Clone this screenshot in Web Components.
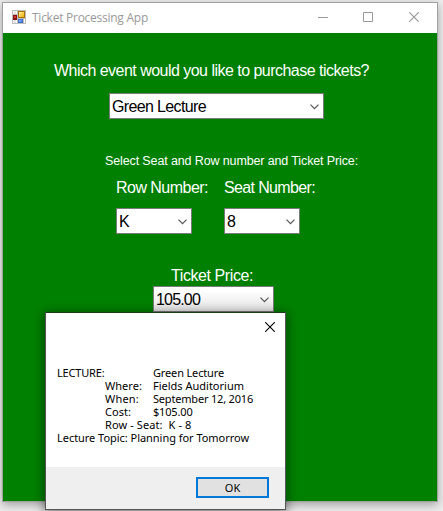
<!DOCTYPE html>
<html lang="en">
<head>
<meta charset="utf-8">
<title>Ticket Processing App</title>
<style>
html,body{margin:0;width:443px;height:511px;overflow:hidden}
body{background:#ededed;position:relative}
</style>
</head>
<body>
<ticket-app></ticket-app>
<script>
const define = (name, html, setup) => customElements.define(name, class extends HTMLElement {
  connectedCallback() {
    if (!this.shadowRoot) this.attachShadow({mode: 'open'}).innerHTML = html;
    if (setup) setup(this, this.shadowRoot);
  }
});

/* A line of text whose letter spacing is adjusted to fill the width in its "w" attribute. */
define('fit-text', `<style>
:host{display:block;white-space:pre;width:max-content}
span{display:inline-block}
</style><span><slot></slot></span>`, (host, root) => {
  const want = +host.getAttribute('w');
  const n = host.textContent.length;
  const have = root.querySelector('span').getBoundingClientRect().width;
  if (want && have) host.style.letterSpacing = ((want - have) / n).toFixed(4) + 'px';
});

define('combo-box', `<style>
:host{display:flex;box-sizing:border-box;height:26px;align-items:center;justify-content:space-between;
border:1px solid #7a7a7a;background:#fff;color:#000;padding:1px 4px 0 2px;font-size:16px;line-height:21px}
svg{display:block;width:9px;height:6px;margin-top:1px}
</style><slot></slot><svg viewBox="0 0 9 6"><path d="M.5 .7L4.5 4.7L8.5 .7" fill="none" stroke="#555" stroke-width="1.2"/></svg>`);

define('form-icon', `<style>:host{display:block;width:14px;height:14px}svg{display:block}</style>
<svg width="14" height="14" viewBox="0 0 14 14">
<defs><linearGradient id="y" x1="0" y1="0" x2="1" y2="1"><stop offset="0" stop-color="#fff0a0"/><stop offset="1" stop-color="#f0b000"/></linearGradient>
<linearGradient id="b" x1="0" y1="0" x2="1" y2="1"><stop offset="0" stop-color="#8cb8f8"/><stop offset="1" stop-color="#3c78dc"/></linearGradient></defs>
<path fill="#bdbdbd" d="M0 0h14v14H0z"/>
<path fill="#fff" d="M1 1h1.6v3H1zM3.4 1H5v3H3.4zM1 10h1.6v3H1zM3.4 10H5v3H3.4zM12 9h1v4h-1z"/>
<path fill="#8c1010" d="M1 5h4v5H1z"/><path fill="#d03c34" d="M2 6h2v2H2z"/>
<path fill="#a87200" d="M6 1h7v7H6z"/><path fill="url(#y)" d="M7 2h5v5H7z"/>
<path fill="#3465c0" d="M6 9h5v4H6z"/><path fill="url(#b)" d="M6.7 9.7h3.6v2.6H6.7z"/></svg>`);

define('window-controls', `<style>:host{display:block}svg{display:block}</style>
<svg width="102" height="10" viewBox="0 0 102 10" fill="none" stroke="#999">
<path d="M0 5.5H10"/><path d="M45.5 .5h9v9h-9z"/><path d="M91.3 .3l9.4 9.4M100.7 .3l-9.4 9.4" stroke-width="1.1"/></svg>`);

define('title-bar', `<style>
:host{display:flex;box-sizing:border-box;height:30px;background:#fff;padding:7px 16px 0 9px;align-items:flex-start;
font:12px/15px "Open Sans","Noto Sans",sans-serif;color:#999}
form-icon{margin-right:6px}
fit-text{margin-top:1px}
window-controls{margin-left:auto;margin-top:2px;margin-right:1px}
</style><form-icon></form-icon><slot></slot><window-controls></window-controls>`);

define('message-dialog', `<style>
:host{display:block;box-sizing:border-box;width:241px;height:198px;border:1px solid #555;border-top-color:#173c17;background:#fff;color:#000;
font:11px/13px "Noto Sans","Open Sans",sans-serif;box-shadow:0 2px 10px 1px rgba(0,0,0,.48)}
.top{display:flex;justify-content:flex-end;padding:9px 10px 0 0;height:45px;box-sizing:border-box}
.body{height:109px;box-sizing:border-box;padding:8px 0 0 11px}
.row{display:grid;grid-template-columns:48px 48px auto;height:13px}
.sub{grid-column:2}.val{grid-column:3}
.wide{grid-column:1 / 4}.rest{grid-column:2 / 4}
footer{height:42px;box-sizing:border-box;background:#efefef;display:flex;justify-content:flex-end;padding:10px 16px 0 0}
button{all:unset;box-sizing:border-box;width:73px;height:21px;border:2px solid #0078d7;background:#e1e1e1;display:flex;justify-content:center;align-items:center}
</style>
<div class="top"><svg width="10" height="10" viewBox="0 0 10 10"><path d="M.2 .2L9.8 9.8M9.8 .2L.2 9.8" stroke="#000" stroke-width="1.1"/></svg></div>
<div class="body">
<div class="row"><fit-text w="47.5" style="grid-column:1">LECTURE:</fit-text><fit-text class="val" w="71">Green Lecture</fit-text></div>
<div class="row"><fit-text class="sub" w="37">Where:</fit-text><fit-text class="val" w="91">Fields Auditorium</fit-text></div>
<div class="row"><fit-text class="sub" w="34">When:</fit-text><fit-text class="val" w="100">September 12, 2016</fit-text></div>
<div class="row"><fit-text class="sub" w="26">Cost:</fit-text><fit-text class="val" w="39.5">$105.00</fit-text></div>
<div class="row"><fit-text class="rest" w="86.5">Row - Seat:  K - 8</fit-text></div>
<div class="row"><fit-text class="wide" w="192">Lecture Topic: Planning for Tomorrow</fit-text></div>
</div>
<footer><button><fit-text w="15.5">OK</fit-text></button></footer>`);

define('ticket-app', `<style>
:host{display:block;box-sizing:border-box;height:511px;padding:2px 5px 9px 2px;position:relative}
.window{box-sizing:border-box;width:436px;height:500px;border:1px solid #a0a0a0;box-shadow:0 3px 9px rgba(0,0,0,.32);display:flex;flex-direction:column}
main{flex:1;background:#008000;color:#fff;font:16px/18px "Liberation Sans",Arial,sans-serif;display:flex;flex-direction:column;align-items:flex-start;padding-top:29px}
.question{margin-left:51px}
.event{width:215px;margin:13px 0 0 106px}
.hint{font-size:12.5px;line-height:15px;margin:35px 0 0 102px}
.seats{display:grid;grid-template-columns:76px 76px;column-gap:32px;row-gap:11px;margin:10px 0 0 113px}
.price-label{margin:33px 0 0 168px}
.price{width:121px;margin:1px 0 0 150px;background:linear-gradient(#fff 15%,#e4e4e4)}
message-dialog{position:absolute;left:45px;top:312px}
</style>
<div class="window">
<title-bar><fit-text w="116">Ticket Processing App</fit-text></title-bar>
<main>
<fit-text class="question" w="315">Which event would you like to purchase tickets?</fit-text>
<combo-box class="event"><fit-text w="94">Green Lecture</fit-text></combo-box>
<fit-text class="hint" w="253">Select Seat and Row number and Ticket Price:</fit-text>
<div class="seats">
<fit-text w="92">Row Number:</fit-text><fit-text w="91">Seat Number:</fit-text>
<combo-box><fit-text>K</fit-text></combo-box><combo-box><fit-text>8</fit-text></combo-box>
</div>
<fit-text class="price-label" w="82">Ticket Price:</fit-text>
<combo-box class="price"><fit-text w="44">105.00</fit-text></combo-box>
</main>
</div>
<message-dialog></message-dialog>`);
</script>
</body>
</html>
